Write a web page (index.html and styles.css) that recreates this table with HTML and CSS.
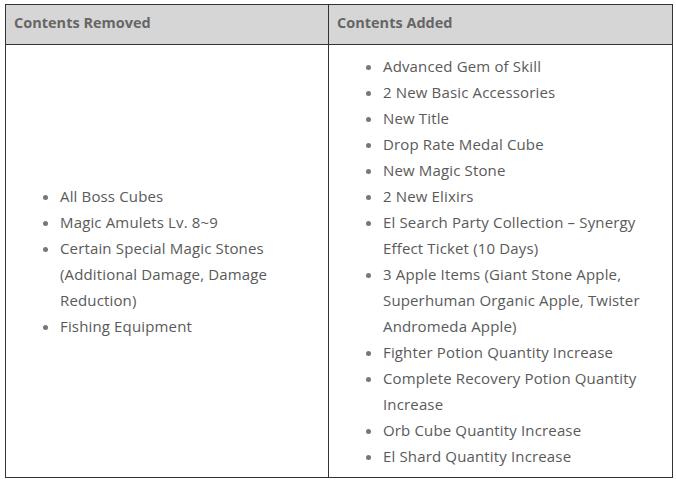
FILE: index.html
```html
<!DOCTYPE html>
<html>
<head>
<meta charset="utf-8">
<link rel="stylesheet" href="styles.css">
</head>
<body>
<table class="cmp">
  <thead>
    <tr>
      <th class="col-left">Contents Removed</th>
      <th>Contents Added</th>
    </tr>
  </thead>
  <tbody>
    <tr>
      <td>
        <ul>
          <li>All Boss Cubes</li>
          <li>Magic Amulets Lv. 8~9</li>
          <li>Certain Special Magic Stones (Additional Damage, Damage Reduction)</li>
          <li>Fishing Equipment</li>
        </ul>
      </td>
      <td>
        <ul>
          <li>Advanced Gem of Skill</li>
          <li>2 New Basic Accessories</li>
          <li>New Title</li>
          <li>Drop Rate Medal Cube</li>
          <li>New Magic Stone</li>
          <li>2 New Elixirs</li>
          <li>El Search Party Collection – Synergy Effect Ticket (10 Days)</li>
          <li>3 Apple Items (Giant Stone Apple, Superhuman Organic Apple, Twister Andromeda Apple)</li>
          <li>Fighter Potion Quantity Increase</li>
          <li>Complete Recovery Potion Quantity Increase</li>
          <li>Orb Cube Quantity Increase</li>
          <li>El Shard Quantity Increase</li>
        </ul>
      </td>
    </tr>
  </tbody>
</table>
</body>
</html>
```
FILE: styles.css
```css
html, body {
  margin: 0;
  padding: 0;
  background: #ffffff;
}
body {
  padding: 4px 3px 0 5px;
  font-family: "Open Sans", "Liberation Sans", sans-serif;
}
.cmp {
  border-collapse: collapse;
  width: 668px;
  color: #5a5a5a;
  font-size: 15px;
  letter-spacing: 0.15px;
}
.cmp th, .cmp td {
  border: 1px solid #333;
  text-align: left;
  vertical-align: middle;
}
.cmp th {
  background: #d6d6d6;
  font-weight: 700;
  color: #666;
  height: 35px;
  padding: 0 8px 4px 8px;
  font-size: 14.5px;
  letter-spacing: 0;
}
.col-left {
  width: 306px;
}
.cmp td {
  padding: 8px 14px;
}
.cmp ul {
  margin: 0;
  padding-left: 40px;
}
.cmp li {
  line-height: 26px;
}
.cmp li::marker {
  color: #777;
}
```
